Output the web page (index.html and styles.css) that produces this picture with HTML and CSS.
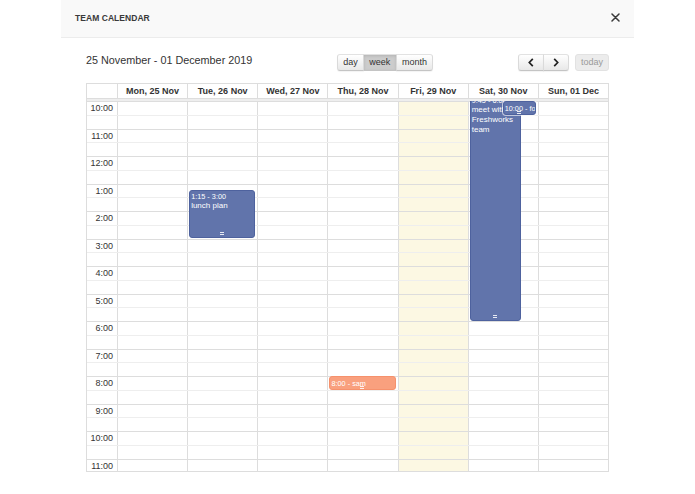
FILE: index.html
```html
<!DOCTYPE html>
<html>
<head>
<meta charset="utf-8">
<title>Team Calendar</title>
<link rel="stylesheet" href="styles.css">
</head>
<body>
<div class="modal">
  <div class="modal-header">
    <span class="modal-title">TEAM CALENDAR</span>
    <button class="close" aria-label="Close">
      <svg width="9" height="9" viewBox="0 0 9 9"><path d="M1 1L8 8M8 1L1 8" stroke="#3a3a3a" stroke-width="1.5" stroke-linecap="round"/></svg>
    </button>
  </div>
  <div class="modal-body">
    <div class="toolbar">
      <h2 class="range">25 November - 01 December 2019</h2>
      <div class="btn-group">
        <button class="btn">day</button><button class="btn active">week</button><button class="btn">month</button>
      </div>
      <div class="nav">
        <div class="btn-group">
          <button class="btn icon" aria-label="prev"><svg width="6" height="9" viewBox="0 0 6 9"><path d="M4.8 0.8L1.3 4.5L4.8 8.2" fill="none" stroke="#222" stroke-width="1.7"/></svg></button><button class="btn icon" aria-label="next"><svg width="6" height="9" viewBox="0 0 6 9"><path d="M1.2 0.8L4.7 4.5L1.2 8.2" fill="none" stroke="#222" stroke-width="1.7"/></svg></button>
        </div>
        <button class="btn today" disabled>today</button>
      </div>
    </div>

    <div class="cal">
      <div class="cal-head">
        <div class="axis"></div>
        <div class="day">Mon, 25 Nov</div>
        <div class="day">Tue, 26 Nov</div>
        <div class="day">Wed, 27 Nov</div>
        <div class="day">Thu, 28 Nov</div>
        <div class="day">Fri, 29 Nov</div>
        <div class="day">Sat, 30 Nov</div>
        <div class="day">Sun, 01 Dec</div>
      </div>
      <div class="divider"></div>
      <div class="cal-body">
        <div class="bg-cols">
          <div class="axis"></div>
          <div class="col"></div>
          <div class="col"></div>
          <div class="col"></div>
          <div class="col"></div>
          <div class="col is-today"></div>
          <div class="col"></div>
          <div class="col"></div>
        </div>

        <div class="slats">
          <div class="slat major"><span class="lbl">10:00</span></div><div class="slat"></div>
          <div class="slat major"><span class="lbl">11:00</span></div><div class="slat"></div>
          <div class="slat major"><span class="lbl">12:00</span></div><div class="slat"></div>
          <div class="slat major"><span class="lbl">1:00</span></div><div class="slat"></div>
          <div class="slat major"><span class="lbl">2:00</span></div><div class="slat"></div>
          <div class="slat major"><span class="lbl">3:00</span></div><div class="slat"></div>
          <div class="slat major"><span class="lbl">4:00</span></div><div class="slat"></div>
          <div class="slat major"><span class="lbl">5:00</span></div><div class="slat"></div>
          <div class="slat major"><span class="lbl">6:00</span></div><div class="slat"></div>
          <div class="slat major"><span class="lbl">7:00</span></div><div class="slat"></div>
          <div class="slat major"><span class="lbl">8:00</span></div><div class="slat"></div>
          <div class="slat major"><span class="lbl">9:00</span></div><div class="slat"></div>
          <div class="slat major"><span class="lbl">10:00</span></div><div class="slat"></div>
          <div class="slat major"><span class="lbl">11:00</span></div><div class="slat"></div>
        </div>

        <div class="ev-cols">
          <div class="axis"></div>
          <div class="col"></div>
          <div class="col">
            <div class="event blue" style="top:89.4px;height:48.1px;left:1px;right:2px">
              <div class="ev-time">1:15 - 3:00</div>
              <div class="ev-title">lunch plan</div>
              <span class="resizer"></span>
            </div>
          </div>
          <div class="col"></div>
          <div class="col">
            <div class="event orange short" style="top:275px;height:14px;left:1px;right:2px">
              <span class="ev-time">8:00</span><span class="ev-title">sam</span>
              <span class="resizer"></span>
            </div>
          </div>
          <div class="col"></div>
          <div class="col">
            <div class="event blue" style="top:-6.9px;height:226.9px;left:1px;right:17px">
              <div class="ev-time">9:45 - 6:00</div>
              <div class="ev-title">meet with Freshworks team</div>
              <span class="resizer"></span>
            </div>
            <div class="event blue short inset" style="top:0;height:14px;left:34px;right:2px">
              <span class="ev-time">10:00</span><span class="ev-title">fo</span>
              <span class="resizer"></span>
            </div>
          </div>
          <div class="col"></div>
        </div>
      </div>
    </div>
  </div>
</div>
</body>
</html>
```

FILE: styles.css
```css
* {
  box-sizing: border-box;
}

html,
body {
  margin: 0;
  background: #fff;
}

body {
  font-family: "Liberation Sans", Arial, Helvetica, sans-serif;
  color: #333;
}

.modal {
  width: 573px;
  margin-left: 61px;
}

.modal-header {
  height: 38px;
  display: flex;
  align-items: center;
  justify-content: space-between;
  padding: 0 14px 2px 14px;
  background: #f9f9f9;
  border-bottom: 1px solid #ececec;
}

.modal-title {
  font-size: 8.5px;
  font-weight: 700;
  color: #3a3a3a;
  letter-spacing: 0.05px;
}

.close {
  border: 0;
  background: none;
  padding: 0;
  width: 9px;
  height: 9px;
  display: flex;
  cursor: pointer;
}

.modal-body {
  padding: 16px 25px 0;
}

.toolbar {
  display: flex;
  justify-content: space-between;
  align-items: flex-start;
  margin-bottom: 12px;
}

.range {
  margin: 0;
  font-size: 10.8px;
  font-weight: 400;
  line-height: 12px;
  color: #333;
}

.btn-group {
  display: flex;
}

.btn {
  height: 17px;
  margin: 0;
  padding: 0 5.3px;
  font-family: "Liberation Sans", Arial, sans-serif;
  font-size: 9px;
  line-height: 15px;
  color: #333;
  border: 1px solid;
  border-color: #e2e2e2 #dadada #c4c4c4;
  background: linear-gradient(#ffffff, #e8e8e8);
  box-shadow: inset 0 1px 0 rgba(255, 255, 255, 0.3), 0 1px 1px rgba(0, 0, 0, 0.05);
  border-radius: 3px;
}

.btn-group .btn {
  border-radius: 0;
}

.btn-group .btn + .btn {
  margin-left: -1px;
}

.btn-group .btn:first-child {
  border-radius: 3px 0 0 3px;
}

.btn-group .btn:last-child {
  border-radius: 0 3px 3px 0;
}

.btn.active {
  background: #cccccc;
  box-shadow: inset 0 1px 3px rgba(0, 0, 0, 0.12);
  position: relative;
}

.btn.icon {
  width: 26px;
  padding: 0;
  display: flex;
  align-items: center;
  justify-content: center;
}

.nav {
  display: flex;
  gap: 6px;
}

.btn.today {
  width: 34px;
  padding: 0;
  color: #9a9a9a;
  background: #ececec;
  border-color: #e2e2e2;
  box-shadow: none;
}

/* calendar table */
.cal {
  border: 1px solid #dddddd;
}

.cal-head {
  display: grid;
  grid-template-columns: 30px repeat(7, 1fr);
  height: 15px;
  border-bottom: 1px solid #dddddd;
}

.cal-head .day {
  border-left: 1px solid #dddddd;
  font-size: 9px;
  font-weight: 700;
  line-height: 14px;
  text-align: center;
  color: #333;
  white-space: nowrap;
}

.divider {
  height: 2px;
  background: #eeeeee;
}

.cal-body {
  position: relative;
  height: 370px;
  overflow: hidden;
}

.bg-cols,
.ev-cols {
  position: absolute;
  top: 0;
  left: 0;
  right: 0;
  bottom: 0;
  display: grid;
  grid-template-columns: 30px repeat(7, 1fr);
}

.bg-cols .col {
  border-left: 1px solid #dddddd;
}

.bg-cols .is-today {
  background: #fcf8e3;
}

.slats {
  position: relative;
}

.slat {
  height: 13.75px;
  border-top: 1px solid #eeeeee;
  display: grid;
  grid-template-columns: 30px 1fr;
}

.slat.major {
  border-top-color: #dddddd;
}

.slat .lbl {
  font-size: 9px;
  line-height: 12.75px;
  text-align: right;
  padding-right: 4px;
  color: #333;
  white-space: nowrap;
}

.ev-cols .col {
  position: relative;
  border-left: 1px solid transparent;
}

.event {
  position: absolute;
  border: 1px solid;
  border-radius: 3px;
  color: #fff;
  overflow: hidden;
  padding: 1px 1px 0 1px;
}

.event.blue {
  background: #6174ab;
  border-color: #4e629e;
}

.event.orange {
  background: #f9a07e;
  border-color: #f6916c;
}

.event.inset {
  z-index: 2;
  box-shadow: 0 0 0 1px rgba(255, 255, 255, 0.6);
}

.ev-time {
  font-size: 7.3px;
  line-height: 9px;
  white-space: nowrap;
}

.ev-title {
  font-size: 8px;
  line-height: 10px;
}

.event.short {
  display: flex;
  align-items: center;
  white-space: nowrap;
  padding: 0 1px;
}

.event.short .ev-time,
.event.short .ev-title {
  font-size: 7.3px;
  line-height: 11px;
}

.event.short .ev-time::after {
  content: "\00a0-\00a0";
}

.resizer {
  position: absolute;
  left: 50%;
  bottom: 2px;
  width: 4px;
  height: 3px;
  margin-left: -2px;
  border-top: 1px solid rgba(255, 255, 255, 0.85);
  border-bottom: 1px solid rgba(255, 255, 255, 0.85);
}

.event.short .resizer {
  bottom: 0;
}
```
